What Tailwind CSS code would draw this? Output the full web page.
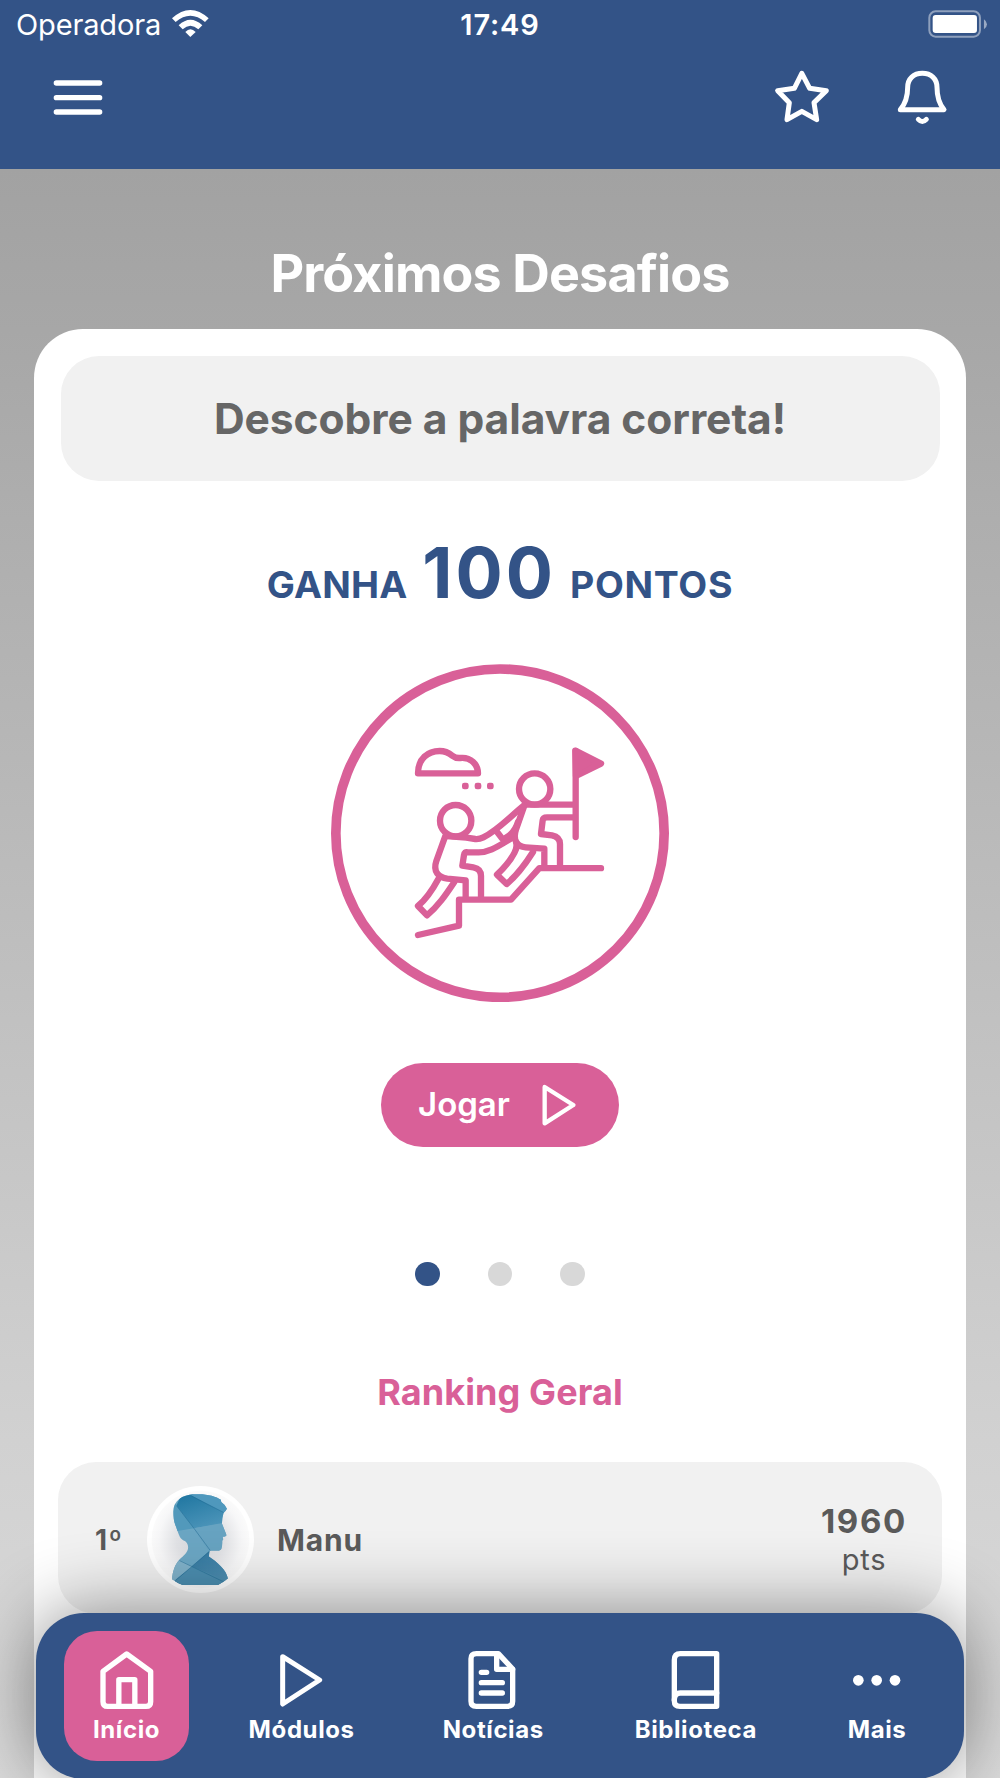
<!DOCTYPE html>
<html lang="pt">
<head>
<meta charset="utf-8">
<title>Próximos Desafios</title>
<script src="https://cdn.jsdelivr.net/npm/@tailwindcss/browser@4"></script>
</head>
<body class="relative flex h-[1778px] w-[1000px] flex-col overflow-hidden bg-[linear-gradient(180deg,#a2a2a2_169px,#a7a7a7_330px,#b1b1b1_600px,#d1d1d1_1440px,#dadada_1778px)] font-['Inter',sans-serif] whitespace-nowrap">

<header class="h-[169px] shrink-0 bg-[#335387] text-white">
  <!-- Status bar -->
  <div class="grid h-[50px] grid-cols-3 items-center text-[29px] leading-[50px]">
    <div class="flex items-center gap-[11px] pl-[16px]">
      <span class="tracking-[-0.14px]">Operadora</span>
      <svg class="mb-[4px] h-[29px] w-[37px]" viewBox="515 27 111 87" fill="#fff"><path d="M515 55Q570 5 625 55L614 66Q570 28 526 66Z"/><path d="M535 76Q570 43 606 76L594 88Q570 66 547 88Z"/><path d="M555 96Q570 79 586 96L570 111Z"/></svg>
    </div>
    <div class="text-center font-semibold tracking-[0.86px]">17:49</div>
    <div class="flex justify-end pr-[12.5px]">
      <svg class="mb-[2px] h-[28px] w-[59.3px]" viewBox="1284 30 178 84"><rect x="1288" y="34" width="152" height="76" rx="19" fill="none" stroke="#fff" stroke-opacity=".45" stroke-width="6"/><rect x="1298" y="45" width="133" height="54" rx="9" fill="#fff"/><path d="M1452 58Q1461 64 1461 73Q1461 82 1452 88Z" fill="#fff" fill-opacity=".5"/></svg>
    </div>
  </div>
  <!-- Toolbar -->
  <div class="mt-[17px] flex items-center pr-[48px] pl-[47.5px]">
    <svg class="size-[60px]" viewBox="142 201 180 180" fill="none" stroke="#fff" stroke-width="16" stroke-linecap="round"><path d="M167 249H297M167 293H297M167 336H297"/></svg>
    <svg class="ml-auto size-[60px]" viewBox="816 201 180 180" fill="none" stroke="#fff" stroke-width="15" stroke-linejoin="round"><path d="M905.500 220L929 265L979 272L942 308L950 359L905.500 334L861 359L868 308L833 272L883 265Z"/></svg>
    <svg class="ml-[60px] size-[60px]" viewBox="1177 201 180 180" fill="none" stroke="#fff" stroke-width="15" stroke-linecap="round" stroke-linejoin="round"><path d="M1202 329C1219 309 1224 288 1224 262C1224 236 1242 220 1268 220C1294 220 1312 236 1312 262C1312 288 1316 309 1333 329Z"/><path d="M1256 358Q1268 371 1280 358"/></svg>
  </div>
</header>

<h1 class="h-[160px] shrink-0 pt-[75px] text-center text-[52px] leading-[60px] font-bold tracking-[-0.85px] text-white">Próximos Desafios</h1>

<main class="mx-[34px] flex flex-1 flex-col items-center rounded-t-[49px] bg-white pt-[27px]">
  <div class="h-[124.5px] w-[879px] shrink-0 rounded-[38px] bg-[#f1f1f1] text-center text-[42.5px] leading-[125px] font-bold tracking-[-0.05px] text-[#666]">Descobre a palavra correta!</div>

  <div class="mt-[56.5px] flex h-[72px] shrink-0 items-baseline text-[37.5px] leading-[72px] font-bold text-[#335387]">
    <span class="tracking-[0.2px]">GANHA</span>
    <span class="ml-[15px] text-[70px] tracking-[3px]">100</span>
    <span class="ml-[14px] tracking-[0.7px]">PONTOS</span>
  </div>

  <svg class="mt-[55px] size-[338px] shrink-0" viewBox="33 42 1014 1014" fill="none" stroke="#d96098" stroke-width="19" stroke-linecap="round" stroke-linejoin="round">
    <circle cx="540" cy="549.500" r="492.500" stroke-width="29"/>
    <!-- Cloud -->
    <path d="M294 370C294 326 324 303 359 303C376 303 387 309 397 317Q407 325 420 324C452 320 474 343 474 370Z"/>
    <g fill="#d96098" stroke="none"><rect x="426" y="398" width="20" height="20" rx="7"/><rect x="464" y="398" width="20" height="20" rx="7"/><rect x="501" y="398" width="20" height="20" rx="7"/></g>
    <!-- Flag -->
    <path d="M767 303V561"/>
    <path d="M766 302L843 341L768 378Z" fill="#d96098"/>
    <!-- Upper climber -->
    <circle cx="644" cy="417" r="47"/>
    <path d="M620 464H760"/>
    <path d="M614 464L588 538C577 570 592 590 617 592L673 596V648"/>
    <path d="M760 502H681Q669 502 668 511L663 552L696 556Q720 561 720 582V648"/>
    <path d="M588 576C592 590 589 598 584 607C571 633 551 655 531 674L560 702C591 676 615 644 639 606"/>
    <!-- Lower climber -->
    <circle cx="407" cy="512" r="47"/>
    <path d="M380 558L439 563L466 567Q478 568 490 562C532 542 568 502 610 468"/>
    <path d="M376 558L349 633C338 665 356 683 382 686L437 691V744"/>
    <path d="M576 564C536 588 505 610 470 607H443Q433 605 432 615L427 647L460 652Q483 656 483 678V744"/>
    <path d="M530 544L546 565M556 564Q584 550 594 516"/>
    <path d="M355 687C341 713 319 747 294 768L321 796C354 769 377 735 403 696"/>
    <!-- Ground -->
    <path d="M294 855L417 827V749H573L658 654.500H843"/>
  </svg>

  <button class="mt-[61px] flex h-[84px] w-[238px] shrink-0 items-center rounded-full bg-[#d96098] pl-[37px] text-[33px] font-semibold text-white">
    Jogar
    <svg class="ml-[32px] h-[42px] w-[34px]" viewBox="545 132 102 126" fill="none" stroke="#fff" stroke-width="13" stroke-linejoin="round"><path d="M553 141L639 195L553 250Z"/></svg>
  </button>

  <div class="mt-[114.500px] flex shrink-0 gap-[48px]">
    <i class="size-[24.5px] rounded-full bg-[#335387]"></i>
    <i class="size-[24.5px] rounded-full bg-[#d8d8d8]"></i>
    <i class="size-[24.5px] rounded-full bg-[#d8d8d8]"></i>
  </div>

  <h2 class="mt-[85.5px] h-[40px] shrink-0 text-[36px] leading-[40px] font-bold tracking-[0.1px] text-[#d96098]">Ranking Geral</h2>

  <div class="mt-[50.5px] flex h-[152px] w-[884px] shrink-0 items-center rounded-[38px] bg-[#f1f1f1] pr-[33px] pl-[37px] text-[#5a5a5a]">
    <span class="w-[52px] pt-[4px] text-[28px] font-bold tracking-[1.5px]">1º</span>
    <svg class="mt-[3px] size-[107px]" viewBox="440 138 320 320">
      <defs>
        <radialGradient id="disc" cx="50%" cy="50%" r="50%"><stop offset="0" stop-color="#d3d4d9"/><stop offset=".5" stop-color="#e2e3e6"/><stop offset=".85" stop-color="#f7f7f8"/><stop offset="1" stop-color="#fbfbfb"/></radialGradient>
        <linearGradient id="crown" x1="0" y1="0" x2=".5" y2="1"><stop offset="0" stop-color="#1c749f"/><stop offset="1" stop-color="#4a93b8"/></linearGradient>
        <linearGradient id="collar" x1="0" y1="0" x2="1" y2="1"><stop offset="0" stop-color="#296f99"/><stop offset="1" stop-color="#5594b5"/></linearGradient>
        <clipPath id="bust"><path d="M519 215C520 180 545 166 580 163C615 160 645 168 661 179L662 186Q675 195 679 206Q675 214 669 218Q664 235 664 250L678 285Q675 290 666 290L668 297Q664 300 665 307Q665 331 655 331L627 331L625 349C650 365 678 390 682 415Q665 428 652 434H547Q530 428 515 417C516 395 525 370 537 358C550 346 562 338 563 322Q563 305 548 300C538 296 532 275 527 260C520 245 519 230 519 215Z"/></clipPath>
      </defs>
      <circle cx="600" cy="298" r="160" fill="#fff"/>
      <circle cx="600" cy="298" r="146" fill="url(#disc)"/>
      <g clip-path="url(#bust)">
        <path d="M500 150H700V450H500Z" fill="#6ba6c3"/>
        <path d="M500 160L530 198L580 264L527 273L500 280Z" fill="#5299bb"/>
        <path d="M528 196L545 160H572L680 220L670 250L580 264Z" fill="url(#crown)"/>
        <path d="M572 166L600 150H690V225L669 217Z" fill="#4f98bd"/>
        <path d="M580 264L670 248L690 340H630Z" fill="#67a3c1"/>
        <path d="M627 332L575 378L500 440H700V332Z" fill="url(#collar)"/>
        <path d="M575 379L520 424L545 440H690V426Z" fill="#4b8daf"/>
        <path d="M537 360L575 379L515 424L500 400Z" fill="#80b1c9"/>
        <path d="M529 198L580 264L630 332M573 168L669 217M625 335L526 420M537 361L668 424" fill="none" stroke="#1d668f" stroke-opacity=".55" stroke-width="2.500"/>
      </g>
    </svg>
    <span class="ml-[23px] pt-[4px] text-[30px] font-bold tracking-[0.8px]">Manu</span>
    <div class="ml-auto flex w-[90px] flex-col items-center pt-[4px]">
      <span class="text-[33px] leading-[38px] font-bold tracking-[1.7px]">1960</span>
      <span class="text-[29px] leading-[39px] tracking-[0.8px]">pts</span>
    </div>
  </div>
</main>

<!-- Floating tab bar -->
<nav class="absolute top-[1613px] left-[36px] flex h-[166px] w-[928px] items-start justify-between rounded-[48px] bg-[#335387] pt-[17.5px] pr-[29.5px] pl-[28px] text-[24px] leading-[24px] font-bold tracking-[0.6px] text-white shadow-[0_0_75px_rgba(0,0,0,0.46)]">
  <a class="flex h-[130.5px] w-[125px] flex-col items-center gap-[7px] rounded-[33px] bg-[#d96098] pt-[20px]">
    <svg class="size-[60px]" viewBox="290 633 180 180" fill="none" stroke="#fff" stroke-width="16" stroke-linecap="round" stroke-linejoin="round"><path d="M379 642L451 694V785Q451 799 437 799H322Q308 799 308 785V694Z"/><path d="M355.500 799V719H403.500V799"/></svg>
    <span>Início</span>
  </a>
  <a class="flex w-[163px] flex-col items-center gap-[7px] pt-[20px]">
    <svg class="size-[60px]" viewBox="816 633 180 180" fill="none" stroke="#fff" stroke-width="15" stroke-linejoin="round"><path d="M848 650L959 720L848 792Z"/></svg>
    <span>Módulos</span>
  </a>
  <a class="flex w-[158px] flex-col items-center gap-[7px] pt-[20px]">
    <svg class="size-[60px]" viewBox="72 33 180 180" fill="none" stroke="#fff" stroke-width="16" stroke-linecap="round" stroke-linejoin="round"><path d="M112 41H178L221 87V184Q221 199 206 199H112Q96 199 96 184V56Q96 41 112 41Z"/><path d="M173 44V88H221M127 97H143M127 128H190M127 159H190"/></svg>
    <span>Notícias</span>
  </a>
  <a class="flex w-[185px] flex-col items-center gap-[7px] pt-[20px]">
    <svg class="size-[60px]" viewBox="494 633 180 180" fill="none" stroke="#fff" stroke-width="16" stroke-linecap="round" stroke-linejoin="round"><path d="M646 641V799H536Q519 799 519 783V660Q519 641 537 641Z"/><path d="M646 759H537Q519 759 519 779"/></svg>
    <span>Biblioteca</span>
  </a>
  <a class="flex w-[115px] flex-col items-center gap-[7px] pt-[20px]">
    <svg class="size-[60px]" viewBox="1039 633 180 180" fill="#fff"><circle cx="1073" cy="721" r="16"/><circle cx="1128" cy="721" r="16"/><circle cx="1183" cy="721" r="16"/></svg>
    <span>Mais</span>
  </a>
</nav>
</body>
</html>
